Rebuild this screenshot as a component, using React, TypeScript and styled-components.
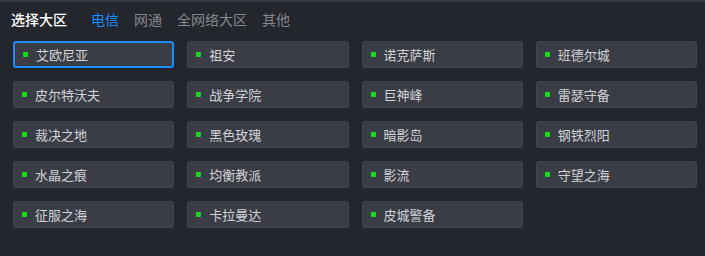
import styled, { createGlobalStyle } from 'styled-components';

const servers = [
  '艾欧尼亚', '祖安', '诺克萨斯', '班德尔城',
  '皮尔特沃夫', '战争学院', '巨神峰', '雷瑟守备',
  '裁决之地', '黑色玫瑰', '暗影岛', '钢铁烈阳',
  '水晶之痕', '均衡教派', '影流', '守望之海',
  '征服之海', '卡拉曼达', '皮城警备',
];

const tabs = ['电信', '网通', '全网络大区', '其他'];

export default function App() {
  return (
    <>
      <GlobalStyle />
      <Panel>
        <Header>
          <Title>选择大区</Title>
          <Tabs>
            {tabs.map((t, i) => (
              <Tab key={t} $active={i === 0}>{t}</Tab>
            ))}
          </Tabs>
        </Header>
        <Grid>
          {servers.map((name, i) => (
            <Server key={name} $selected={i === 0}>
              <Dot />
              <Name>{name}</Name>
            </Server>
          ))}
        </Grid>
      </Panel>
    </>
  );
}

const GlobalStyle = createGlobalStyle`
  html, body {
    margin: 0;
    padding: 0;
    background: #23262d;
  }
  body {
    font-family: "Noto Sans CJK SC", "Microsoft YaHei", sans-serif;
  }
`;

const Panel = styled.div`
  width: 705px;
  height: 256px;
  box-sizing: border-box;
  background: #23262d;
  border-top: 2px solid #34373e;
`;

const Header = styled.div`
  display: flex;
  align-items: center;
  height: 34px;
  padding-left: 11px;
  box-sizing: border-box;
`;

const Title = styled.div`
  font-size: 14px;
  color: #ffffff;
  font-weight: 500;
  margin-right: 24px;
`;

const Tabs = styled.div`
  display: flex;
  gap: 15px;
`;

const Tab = styled.div<{ $active: boolean }>`
  font-size: 14px;
  color: ${(p) => (p.$active ? '#1890ff' : '#83868c')};
`;

const Grid = styled.div`
  display: grid;
  grid-template-columns: repeat(4, 1fr);
  column-gap: 13px;
  row-gap: 13px;
  padding: 5px 8px 0 13px;
`;

const Server = styled.div<{ $selected: boolean }>`
  display: flex;
  align-items: center;
  height: 27px;
  box-sizing: border-box;
  background: #3a3d46;
  border: ${(p) => (p.$selected ? '2px solid #1a8cff' : '1px solid #42454d')};
  border-radius: 3px;
  padding-left: 8px;
`;

const Dot = styled.span`
  width: 5px;
  height: 5px;
  border-radius: 1px;
  background: #12e012;
  margin-right: 8px;
  flex-shrink: 0;
`;

const Name = styled.span`
  font-size: 13px;
  color: #d2d3d6;
`;
